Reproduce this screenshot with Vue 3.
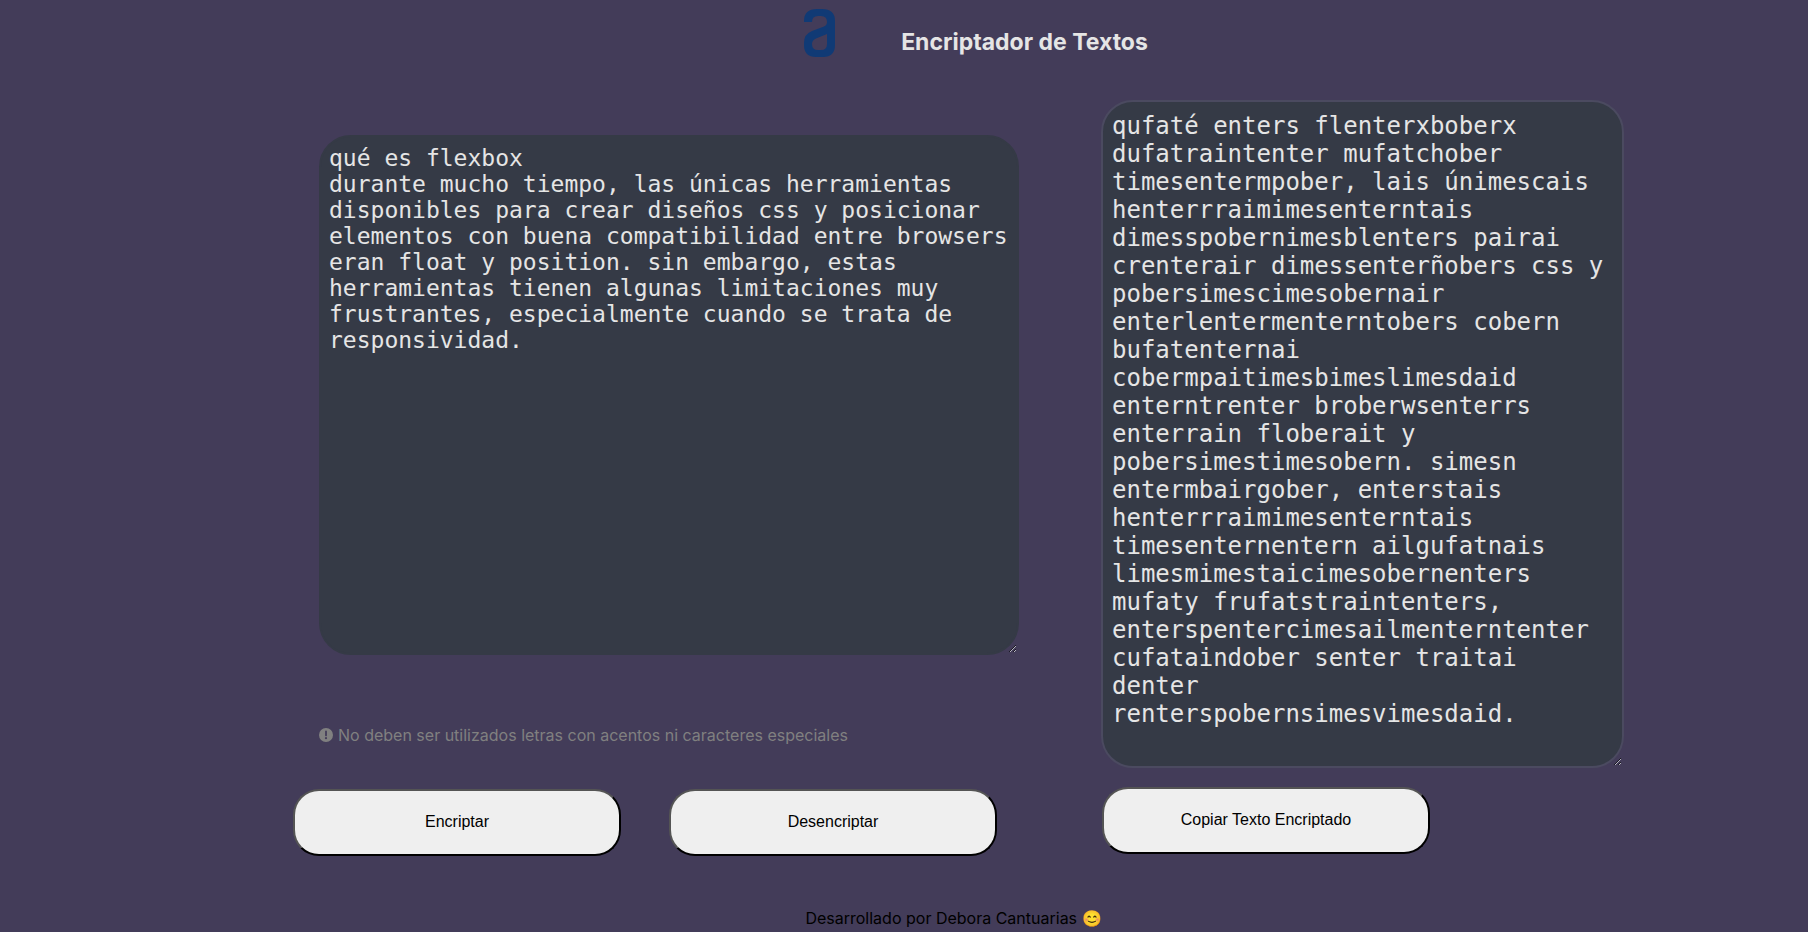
<script setup>
import { ref } from 'vue'

const source = ref(`qué es flexbox
durante mucho tiempo, las únicas herramientas disponibles para crear diseños css y posicionar elementos con buena compatibilidad entre browsers eran float y position. sin embargo, estas herramientas tienen algunas limitaciones muy frustrantes, especialmente cuando se trata de responsividad.`)

const keys = { e: 'enter', i: 'imes', a: 'ai', o: 'ober', u: 'ufat' }

const encrypt = (text) => text.replace(/[eiaou]/g, (c) => keys[c])
const decrypt = (text) =>
  text.replace(/enter|imes|ai|ober|ufat/g, (m) => m[0])

const result = ref(`qufaté enters flenterxboberx
dufatraintenter mufatchober timesentermpober, lais únimescais henterrraimimesenterntais dimesspobernimesblenters pairai crenterair dimessenterñobers css y pobersimescimesobernair enterlentermenterntobers cobern bufatenternai cobermpaitimesbimeslimesdaid enterntrenter broberwsenterrs enterrain floberait y pobersimestimesobern. simesn entermbairgober, enterstais henterrraimimesenterntais timesenternentern ailgufatnais limesmimestaicimesobernenters mufaty frufatstraintenters, enterspentercimesailmenterntenter cufataindober senter traitai denter renterspobernsimesvimesdaid.`)

const copy = () => navigator.clipboard?.writeText(result.value)
</script>

<template>
  <div class="page">
    <header class="header">
      <svg class="logo" viewBox="0 0 31 48" aria-hidden="true">
        <path
          fill="#103a75"
          fill-rule="evenodd"
          d="M0 13V12Q0 0 13 0H18Q31 0 31 12V36Q31 48 19 48H12Q0 48 0 36V34Q0 25 8 22L20 17.5Q23 16 23 13Q23 7 17 7H14Q8 7 8 13ZM23 25L12 29.5Q8 31 8 35Q8 41 14 41H17Q23 41 23 35Z" />
      </svg>
      <h1>Encriptador de Textos</h1>
    </header>

    <main class="main">
      <section class="source">
        <textarea v-model="source" class="field" aria-label="Texto" spellcheck="false"></textarea>
        <p class="note">
          <svg viewBox="0 0 14 14" aria-hidden="true">
            <circle cx="7" cy="7" r="7" fill="#808080" />
            <path d="M7 3.4V7.4" stroke="#433c59" stroke-width="1.8" stroke-linecap="round" />
            <circle cx="7" cy="10.2" r="1.1" fill="#433c59" />
          </svg>
          <span>No deben ser utilizados letras con acentos ni caracteres especiales</span>
        </p>
        <div class="actions">
          <button type="button" @click="result = encrypt(source)">Encriptar</button>
          <button type="button" @click="result = decrypt(source)">Desencriptar</button>
        </div>
      </section>

      <section class="result">
        <textarea v-model="result" class="field" aria-label="Resultado" spellcheck="false"></textarea>
        <button type="button" @click="copy">Copiar Texto Encriptado</button>
      </section>
    </main>

    <footer class="footer">Desarrollado por Debora Cantuarias 😊</footer>
  </div>
</template>

<style>
body {
  margin: 0;
  background: #fff;
}
</style>

<style scoped>
.page {
  box-sizing: border-box;
  padding-top: 9px;
  background: #433c59;
  font-family: Inter, "Liberation Sans", sans-serif;
  font-size: 16px;
}

.header {
  display: flex;
  justify-content: center;
  gap: 66px;
  padding-left: 144px;
}

.logo {
  width: 31px;
  height: 48px;
}

h1 {
  margin: 19px 0 0;
  font-size: 23px;
  line-height: 28px;
  font-weight: 700;
  color: #e5e5e5;
}

.main {
  display: flex;
  justify-content: center;
  gap: 82px;
  padding: 43px 0 0 135px;
}

.source {
  width: 700px;
  padding-top: 35px;
}

.result {
  width: 523px;
}

.field {
  display: block;
  box-sizing: border-box;
  width: 100%;
  padding: 8px;
  border: 2px solid #353a46;
  border-radius: 32px;
  background: #353a46;
  color: #e5e5e5;
  font-family: "DejaVu Sans Mono", monospace;
  overflow: hidden;
  outline: none;
}

.source .field {
  height: 520px;
  font-size: 23px;
  line-height: 26px;
}

.result .field {
  height: 668px;
  padding: 10px 9px;
  border-color: #4b4a60;
  font-size: 24px;
  line-height: 28px;
}

.note {
  display: flex;
  align-items: center;
  gap: 5px;
  margin: 70px 0 0;
  line-height: 20px;
  color: #808080;
}

.note svg {
  width: 14px;
  height: 14px;
}

.actions {
  display: flex;
  gap: 48px;
  margin: 44px 0 0 -26px;
}

button {
  box-sizing: border-box;
  width: 328px;
  height: 67px;
  padding: 0 0 2px;
  border: 2px outset #000;
  border-radius: 26px;
  background: #efefef;
  color: #000;
  font-family: "Liberation Sans", Arial, sans-serif;
  font-size: 16px;
}

.result button {
  display: block;
  margin: 19px 0 0 1px;
}

.footer {
  padding: 52px 0 4px 99px;
  text-align: center;
  line-height: 20px;
  color: #000;
}
</style>
